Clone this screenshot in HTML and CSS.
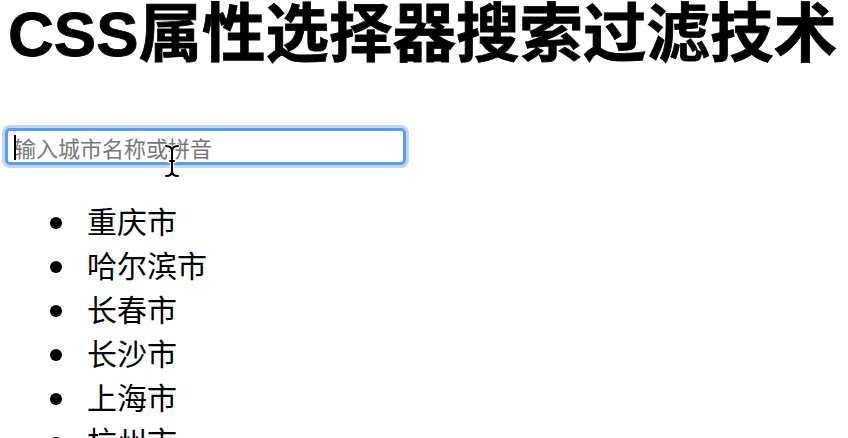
FILE: index.html
```html
<!DOCTYPE html>
<html lang="zh-CN">
<head>
<meta charset="utf-8">
<title>CSS属性选择器搜索过滤技术</title>
<link rel="stylesheet" href="styles.css">
</head>
<body>
<h1 class="title">CSS属性选择器搜索过滤技术</h1>
<div class="search">
  <input class="search-input" type="text" placeholder="输入城市名称或拼音">
  <span class="caret"></span>
  <svg class="ibeam" width="18" height="34" viewBox="0 0 18 34">
    <path d="M3 2 Q9 2 9 7 Q9 2 15 2 M9 7 V27 M3 32 Q9 32 9 27 Q9 32 15 32 M6 17 H12" fill="none" stroke="#fff" stroke-width="4" stroke-linecap="round"/>
    <path d="M3 2 Q9 2 9 7 Q9 2 15 2 M9 7 V27 M3 32 Q9 32 9 27 Q9 32 15 32 M7 17 H11" fill="none" stroke="#000" stroke-width="2" stroke-linecap="round"/>
  </svg>
</div>
<ul class="cities">
  <li>重庆市</li>
  <li>哈尔滨市</li>
  <li>长春市</li>
  <li>长沙市</li>
  <li>上海市</li>
  <li>杭州市</li>
  <li>北京市</li>
  <li>广州市</li>
</ul>
</body>
</html>
```
FILE: styles.css
```css
html, body {
  margin: 0;
  padding: 0;
  background: #fff;
}
body {
  padding: 0 8px;
  font-family: "Noto Sans CJK SC", "Noto Sans", sans-serif;
  color: #000;
}
.title {
  margin: 0;
  font-family: "Liberation Sans", "Noto Sans CJK SC", sans-serif;
  font-weight: bold;
  font-size: 63.5px;
  line-height: 68px;
  white-space: nowrap;
  -webkit-text-stroke: 0.8px #000;
}
.search {
  position: relative;
  margin: 60px 0 0 -3px;
  width: 401px;
  height: 37px;
}
.search-input {
  box-sizing: border-box;
  display: block;
  width: 401px;
  height: 37px;
  margin: 0;
  padding: 0 0 0 6px;
  border: 3px solid #5f9bf0;
  border-radius: 5px;
  box-shadow: 0 0 0 3px rgba(120, 165, 240, 0.45);
  outline: none;
  background: #fff;
  font-family: "Noto Sans CJK SC", sans-serif;
  font-size: 22px;
  color: #000;
}
.search-input::placeholder {
  color: #777;
}
.caret {
  position: absolute;
  left: 9px;
  top: 7px;
  width: 2px;
  height: 25px;
  background: #000;
}
.ibeam {
  position: absolute;
  left: 158px;
  top: 16px;
}
.cities {
  margin: 33px 0 0;
  padding: 0 0 0 79px;
  font-size: 30px;
  line-height: 44px;
  list-style: none;
}
.cities li::before {
  content: "";
  display: inline-block;
  width: 12px;
  height: 12px;
  border-radius: 50%;
  background: #000;
  margin-left: -37px;
  margin-right: 25px;
  vertical-align: middle;
  position: relative;
  top: -2px;
}
```
